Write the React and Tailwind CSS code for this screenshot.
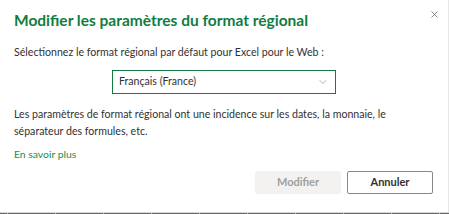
import { ChevronDown, X } from 'lucide-react'

const GRID_TICKS = Array.from({ length: 10 })

export default function App() {
  return (
    <div className="w-[449px] h-[214px] bg-white overflow-hidden flex flex-col font-['Lato',sans-serif] text-[#323130]">
      <div className="flex-1 border-r border-[#e6e6e6] px-[14px] flex flex-col">
        {/* Header */}
        <div className="flex items-start justify-between pt-[10px]">
          <h2 className="text-[15.5px] leading-[20px] font-bold text-[#107c41]">
            Modifier les paramètres du format régional
          </h2>
          <button className="mt-[-1px] mr-[-6px] text-[#605e5c]">
            <X size={11} strokeWidth={1.6} />
          </button>
        </div>

        <p className="mt-[14px] text-[10.6px] leading-[16px]">
          Sélectionnez le format régional par défaut pour Excel pour le Web :
        </p>

        <div className="flex justify-center mt-[10px]">
          <div className="w-[224px] h-[24px] border-[1.5px] border-[#107c41] flex items-center justify-between pl-[6px] pr-[6px]">
            <span className="text-[10.6px]">Français (France)</span>
            <ChevronDown size={12} strokeWidth={1.3} className="text-[#8a8886]" />
          </div>
        </div>

        <p className="mt-[12px] text-[10.6px] leading-[17px]">
          Les paramètres de format régional ont une incidence sur les dates, la monnaie, le
          séparateur des formules, etc.
        </p>

        <a className="mt-[6px] text-[10.4px] leading-[16px] text-[#218a4c] w-fit">En savoir plus</a>

        {/* Buttons */}
        <div className="flex justify-end gap-[6px] mt-[9px] pr-[1px]">
          <button className="w-[86px] h-[23px] rounded-[2px] bg-[#f3f2f1] text-[#a19f9d] text-[11px] font-bold">
            Modifier
          </button>
          <button className="w-[86px] h-[23px] rounded-[2px] border border-[#8a8886] bg-white text-[#323130] text-[11px] font-bold">
            Annuler
          </button>
        </div>
      </div>

      {/* Grid edge underneath */}
      <div className="h-[2px] flex border-t border-[#d4d4d4] bg-[#6b6b6b]">
        <div className="w-[7px] shrink-0" />
        {GRID_TICKS.map((_, i) => (
          <div key={i} className="w-[48px] shrink-0 border-l border-[#bdbdbd]" />
        ))}
      </div>
    </div>
  )
}
